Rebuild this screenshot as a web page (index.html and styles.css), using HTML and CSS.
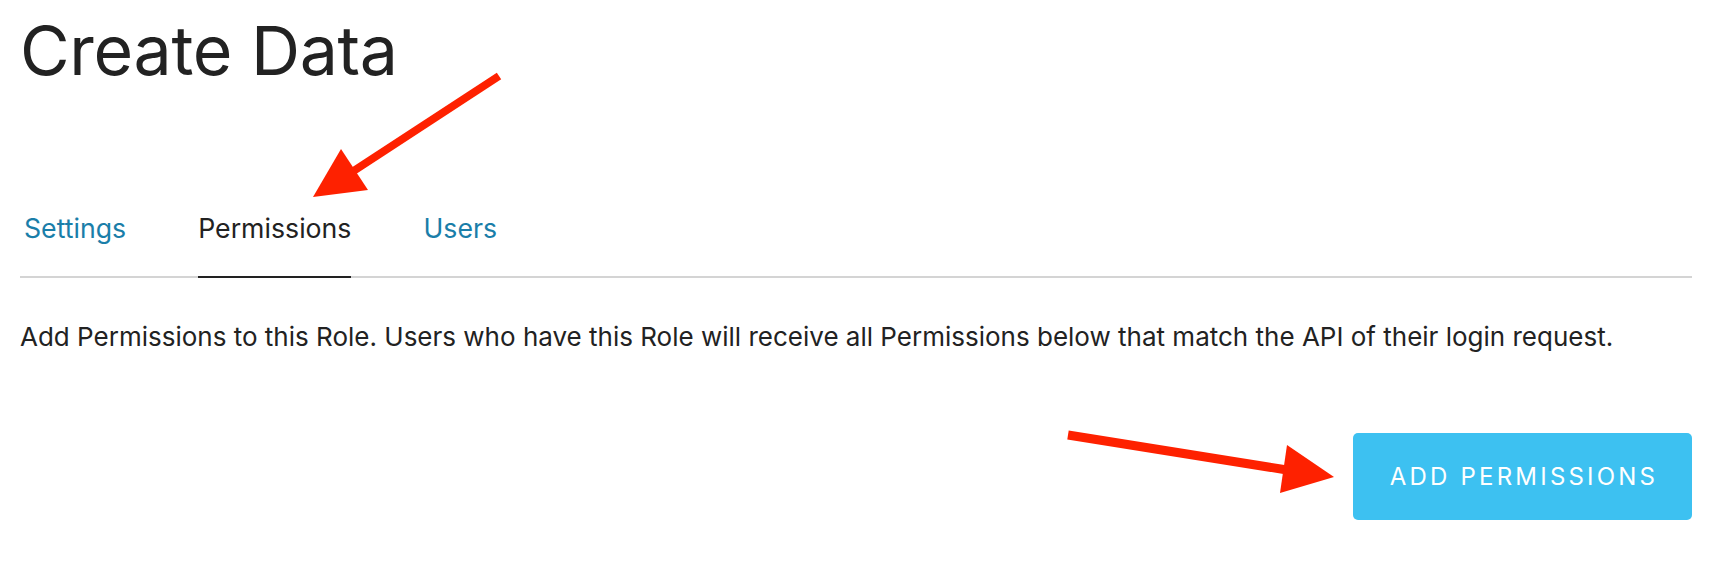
FILE: index.html
```html
<!DOCTYPE html>
<html lang="en">
<head>
<meta charset="utf-8">
<title>Create Data</title>
<link rel="stylesheet" href="styles.css">
</head>
<body>
<main class="page">
  <h1 class="title">Create Data</h1>
  <nav class="tabs">
    <a class="tab" href="#">Settings</a>
    <a class="tab tab-active" href="#">Permissions</a>
    <a class="tab" href="#">Users</a>
  </nav>
  <p class="intro">Add Permissions to this Role. Users who have this Role will receive all Permissions below that match the API of their login request.</p>
  <div class="actions">
    <button class="btn-primary" type="button">ADD PERMISSIONS</button>
  </div>
</main>
<svg class="annotations" width="1724" height="574" viewBox="0 0 1724 574" aria-hidden="true">
  <line x1="499" y1="76" x2="352" y2="172" stroke="#fe2100" stroke-width="8"/>
  <polygon points="313,197 341,149 368,190" fill="#fe2100"/>
  <line x1="1068" y1="435" x2="1287" y2="470" stroke="#fe2100" stroke-width="9"/>
  <polygon points="1287,445 1280,493 1334,477" fill="#fe2100"/>
</svg>
</body>
</html>
```

FILE: styles.css
```css
html, body {
  margin: 0;
  padding: 0;
  background: #ffffff;
}

body {
  font-family: "Inter", "Liberation Sans", sans-serif;
  color: #222222;
  width: 1724px;
  height: 574px;
  overflow: hidden;
  position: relative;
}

.page {
  display: flex;
  flex-direction: column;
  padding: 16px 32px 0 20px;
}

.title {
  margin: 0;
  font-size: 68px;
  line-height: 68px;
  font-weight: 400;
  color: #222222;
  letter-spacing: -0.3px;
}

.tabs {
  display: flex;
  gap: 72px;
  margin-top: 131px;
  padding-left: 4px;
  border-bottom: 2px solid #d4d4d4;
}

.tab {
  display: block;
  font-size: 26.7px;
  line-height: 26px;
  padding-bottom: 35px;
  color: #1a7ea9;
  text-decoration: none;
  margin-bottom: -2px;
  border-bottom: 2px solid transparent;
}

.tab-active {
  color: #222222;
  border-bottom-color: #222222;
}

.intro {
  margin: 46px 0 0 0;
  font-size: 26px;
  line-height: 26px;
  color: #222222;
}

.actions {
  display: flex;
  justify-content: flex-end;
  margin-top: 83px;
}

.btn-primary {
  width: 339px;
  height: 87px;
  border: none;
  border-radius: 5px;
  background: #3dc1f1;
  color: #ffffff;
  font-family: "Inter", "Liberation Sans", sans-serif;
  font-size: 24px;
  letter-spacing: 3.2px;
  font-weight: 400;
  padding: 0 0 0 3px;
}

.annotations {
  position: absolute;
  top: 0;
  left: 0;
  pointer-events: none;
}
```
